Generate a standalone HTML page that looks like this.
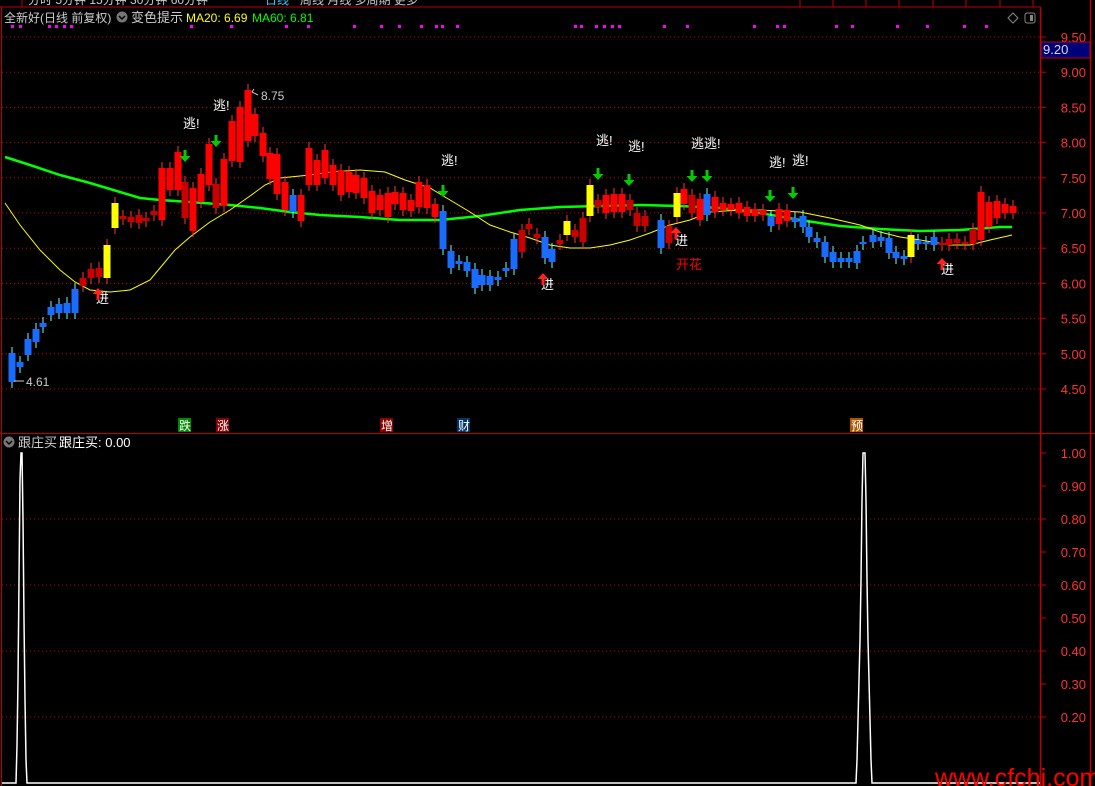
<!DOCTYPE html><html><head><meta charset="utf-8"><style>
body{margin:0;background:#000;width:1095px;height:786px;overflow:hidden;font-family:"Liberation Sans","Noto Sans CJK SC",sans-serif}
svg{display:block}
</style></head><body>
<svg id="s" width="1095" height="786" xmlns="http://www.w3.org/2000/svg" font-family="Liberation Sans, Noto Sans CJK SC, sans-serif">
<rect width="1095" height="786" fill="#000"/>
<line x1="0" y1="7" x2="1040" y2="7" stroke="#c00000"/>
<line x1="22" y1="0" x2="22" y2="7" stroke="#c00000"/>
<text x="28" y="4" fill="#ccc" font-size="12">分时 5分钟 15分钟 30分钟 60分钟 </text><text x="265" y="4" fill="#3cf" font-size="12">日线</text><text x="300" y="4" fill="#ccc" font-size="12">周线 月线 多周期 更多</text>
<g stroke="#c00000"><line x1="800" y1="0" x2="800" y2="7"/><line x1="833" y1="0" x2="833" y2="7"/><line x1="866" y1="0" x2="866" y2="7"/><line x1="899" y1="0" x2="899" y2="7"/><line x1="933" y1="0" x2="933" y2="7"/><line x1="966" y1="0" x2="966" y2="7"/><line x1="1000" y1="0" x2="1000" y2="7"/><line x1="1033" y1="0" x2="1033" y2="7"/></g>
<text x="4" y="22" fill="#ccc" font-size="12">全新好(日线 前复权)</text>
<circle cx="122" cy="17" r="5.5" fill="#777"/><path d="M119 16l3 3 3-3" stroke="#000" fill="none" stroke-width="1.5"/>
<text x="131" y="22" fill="#ccc" font-size="13">变色提示</text>
<text x="186" y="22" fill="#ff0" font-size="12">MA20: 6.69</text>
<text x="252" y="22" fill="#0f0" font-size="12">MA60: 6.81</text>
<path d="M1013 13l5 5-5 5-5-5z" stroke="#888" fill="none"/>
<rect x="1025" y="13" width="10" height="10" rx="2" stroke="#888" fill="none"/><rect x="1030" y="15" width="3" height="6" fill="#888"/>
<g id="dots" fill="#f0f"></g>
<g stroke="#c00000" stroke-dasharray="1,3" id="grid"></g>
<line x1="1040.5" y1="7" x2="1040.5" y2="786" stroke="#c00000" stroke-width="1.5"/>
<line x1="1090.5" y1="0" x2="1090.5" y2="786" stroke="#c00000" stroke-width="1.5"/>
<line x1="0" y1="433.5" x2="1040" y2="433.5" stroke="#c00000"/>
<line x1="1040" y1="433.5" x2="1095" y2="433.5" stroke="#c00000"/>
<line x1="1.5" y1="7" x2="1.5" y2="786" stroke="#c00000"/>
<g id="ax" fill="#ff3333" font-size="13" text-anchor="end"></g>
<rect x="1041" y="42" width="49" height="16" fill="#00007a" stroke="#c00000"/>
<text x="1043" y="54" fill="#ddd" font-size="13">9.20</text>
<polyline fill="none" stroke="#00ff00" stroke-width="2.5" points="5,157 30,165 60,175 90,183 120,192 140,198 160,200 190,202 230,205 260,208 290,212 320,215 360,217 400,220 440,220 480,216 520,210 560,207 600,206 640,205 680,206 720,208 760,213 800,220 840,226 880,229 920,231 960,230 1000,227 1012,227"/>
<polyline fill="none" stroke="#ff0" stroke-width="1" points="5,203 20,225 40,250 60,270 75,282 90,290 110,292 130,290 150,280 160,268 175,250 190,237 210,222 230,210 250,196 265,185 280,178 310,175 330,172 360,170 385,172 405,180 430,188 450,200 470,212 490,225 510,232 530,238 550,245 570,248 590,248 610,245 630,240 650,233 670,225 690,220 710,212 740,210 760,210 800,212 830,218 860,225 880,232 900,237 920,240 950,245 970,245 990,240 1012,235"/>
<g id="c"></g>
<g fill="#fff" font-size="13">
<text x="183" y="128">逃!</text><text x="213" y="110">逃!</text><text x="441" y="165">逃!</text><text x="596" y="145">逃!</text><text x="628" y="151">逃!</text><text x="691" y="148">逃逃!</text><text x="769" y="167">逃!</text><text x="792" y="165">逃!</text>
<text x="96" y="303">进</text><text x="541" y="289">进</text><text x="675" y="245">进</text><text x="941" y="274">进</text>
</g>
<text x="676" y="269" fill="#f00" font-size="13">开花</text>
<g fill="#0c0" id="ga"></g><g fill="#f22" id="ra"></g>
<text x="261" y="100" fill="#ccc" font-size="12">8.75</text><path d="M258 95 l-6 -3 M252 92 l2 -3" stroke="#ccc" fill="none"/>
<text x="26" y="386" fill="#ccc" font-size="12">4.61</text><path d="M14 381h10" stroke="#ccc"/>
<rect x="178" y="418" width="13" height="14" fill="#080"/><text x="179" y="430" fill="#fff" font-size="12">跌</text>
<rect x="216" y="418" width="13" height="14" fill="#800"/><text x="217" y="430" fill="#fff" font-size="12">涨</text>
<rect x="380" y="418" width="13" height="14" fill="#800"/><text x="381" y="430" fill="#fff" font-size="12">增</text>
<rect x="457" y="418" width="13" height="14" fill="#036"/><text x="458" y="430" fill="#fff" font-size="12">财</text>
<rect x="850" y="418" width="13" height="14" fill="#a50"/><text x="851" y="430" fill="#fff" font-size="12">预</text>
<circle cx="9" cy="442" r="5.5" fill="#777"/><path d="M6 441l3 3 3-3" stroke="#000" fill="none" stroke-width="1.5"/>
<text x="18" y="447" fill="#ccc" font-size="13">跟庄买</text><text x="59" y="447" fill="#fff" font-size="13">跟庄买: 0.00</text>
<polyline fill="none" stroke="#fff" stroke-width="1.5" points="2,783 16,783 17,745 18,680 19,580 20,480 21,453 22,453 23,520 24,620 25,700 26,760 27,783 856,783 857,760 858,720 859,680 860,640 861,580 862,500 863,453 865,453 866,500 867,580 868,640 869,680 870,720 871,760 872,783 1040,783"/>
<text x="935" y="786" fill="#f00" font-size="25">www.cfchi.com</text>
</svg>
<script>
var ns="http://www.w3.org/2000/svg";function el(p,t,a,txt){var e=document.createElementNS(ns,t);for(var k in a)e.setAttribute(k,a[k]);if(txt)e.textContent=txt;document.getElementById(p).appendChild(e);}
[11,19,48,55,63,70,190,230,285,307,353,380,398,420,435,441,456,574,580,595,603,611,618,663,686,753,776,783,835,851,896,926,963,985].forEach(function(x){el("dots","rect",{x:x,y:25,width:3,height:3});});
for(var i=0;i<11;i++){var y=37+i*35.2;el("grid","line",{x1:2,y1:y,x2:1040,y2:y});var v=(9.5-i*0.5).toFixed(2);if(i>0)el("ax","text",{x:1086,y:y+5},v);el("ax","line",{x1:1040,y1:y,x2:1046,y2:y,stroke:"#c00000"});}
el("ax","text",{x:1086,y:42},"9.50");
for(var j=0;j<9;j++){var v2=1-j*0.1,y2=453+j*33;if(j%2==0&&j>0)el("grid","line",{x1:2,y1:y2,x2:1040,y2:y2});el("ax","text",{x:1086,y:y2+5},v2.toFixed(2));el("ax","line",{x1:1040,y1:y2,x2:1046,y2:y2,stroke:"#c00000"});}
var d=[[12,353,382,"b"],[20,362,367,"b"],[28,339,355,"b"],[36,329,342,"b"],[43,323,327,"b"],[51,307,315,"b"],[59,304,313,"b"],[67,303,313,"b"],[75,289,313,"b"],[83,278,286,"d"],[91,269,278,"d"],[99,268,277,"d"],[107,245,278,"y"],[115,203,228,"y"],[123,216,219,"d"],[131,217,222,"d"],[139,215,223,"d"],[146,218,221,"d"],[154,211,215,"d"],[162,168,220,"r"],[170,168,190,"r"],[178,152,190,"r"],[185,182,218,"d"],[193,188,231,"r"],[201,174,202,"r"],[209,144,185,"r"],[216,184,208,"d"],[224,159,206,"r"],[232,121,161,"r"],[240,107,162,"r"],[248,90,141,"r"],[255,114,136,"r"],[263,133,156,"r"],[270,153,179,"r"],[277,154,194,"r"],[285,182,210,"r"],[293,195,212,"b"],[301,195,221,"r"],[309,148,185,"r"],[317,160,185,"r"],[325,150,178,"r"],[333,165,185,"r"],[341,170,195,"r"],[349,172,192,"r"],[356,175,193,"r"],[364,178,198,"r"],[372,191,213,"r"],[380,195,210,"r"],[388,193,217,"r"],[395,192,204,"r"],[403,193,210,"r"],[411,200,211,"r"],[419,182,207,"r"],[427,185,208,"r"],[435,204,217,"r"],[443,211,249,"b"],[451,251,268,"b"],[459,261,264,"b"],[467,262,271,"b"],[475,269,288,"b"],[482,275,285,"b"],[490,276,285,"b"],[498,277,280,"b"],[506,268,271,"b"],[514,239,269,"b"],[522,230,252,"d"],[529,224,229,"d"],[537,234,238,"d"],[545,237,258,"b"],[552,249,262,"b"],[560,240,244,"d"],[567,221,235,"y"],[575,230,237,"d"],[583,218,242,"d"],[590,185,216,"y"],[598,200,207,"d"],[606,195,213,"r"],[614,194,212,"r"],[622,194,212,"r"],[630,200,210,"d"],[637,213,226,"d"],[645,216,226,"d"],[661,220,248,"b"],[669,226,243,"d"],[677,193,217,"y"],[684,189,204,"r"],[692,195,213,"d"],[700,199,220,"r"],[707,194,215,"b"],[715,197,212,"r"],[723,203,210,"r"],[731,204,210,"r"],[739,203,213,"r"],[747,207,216,"r"],[755,209,216,"r"],[763,210,215,"r"],[771,216,226,"b"],[779,209,224,"r"],[787,210,221,"r"],[795,218,222,"b"],[803,216,227,"b"],[809,227,237,"b"],[817,238,242,"b"],[825,242,257,"b"],[833,252,262,"b"],[841,258,262,"b"],[849,258,262,"b"],[857,251,263,"b"],[863,242,244,"b"],[873,235,242,"b"],[881,237,241,"b"],[889,238,253,"b"],[896,252,258,"b"],[904,256,259,"b"],[911,235,257,"y"],[918,240,244,"b"],[926,242,244,"b"],[934,237,245,"b"],[942,243,245,"d"],[949,239,245,"d"],[957,239,243,"d"],[965,242,244,"d"],[973,229,244,"d"],[981,192,240,"r"],[989,202,227,"r"],[997,201,218,"r"],[1005,204,213,"r"],[1013,206,213,"r"]];
var col={b:"#1a6cff",r:"#ff0000",d:"#c80000",y:"#ffff00"};var wc={b:"#6ff",r:"#f33",d:"#f33",y:"#f33"};
d.forEach(function(c){var h=Math.max(2,c[2]-c[1]);el("c","line",{x1:c[0],y1:c[1]-6,x2:c[0],y2:c[2]+6,stroke:wc[c[3]]});el("c","rect",{x:c[0]-3.5,y:c[1],width:7,height:h,fill:col[c[3]]});});
[[185,162],[216,147],[443,197],[598,180],[629,186],[692,182],[707,182],[770,202],[793,199]].forEach(function(a){var x=a[0],y=a[1];el("ga","path",{d:"M"+(x-1.5)+" "+(y-12)+"h3v6h4l-5.5 6-5.5-6h4z"});});
[[98,288],[543,273],[676,227],[942,258]].forEach(function(a){var x=a[0],y=a[1];el("ra","path",{d:"M"+x+" "+y+"l5.5 6h-4v6h-3v-6h-4z"});});
</script>
</body></html>
